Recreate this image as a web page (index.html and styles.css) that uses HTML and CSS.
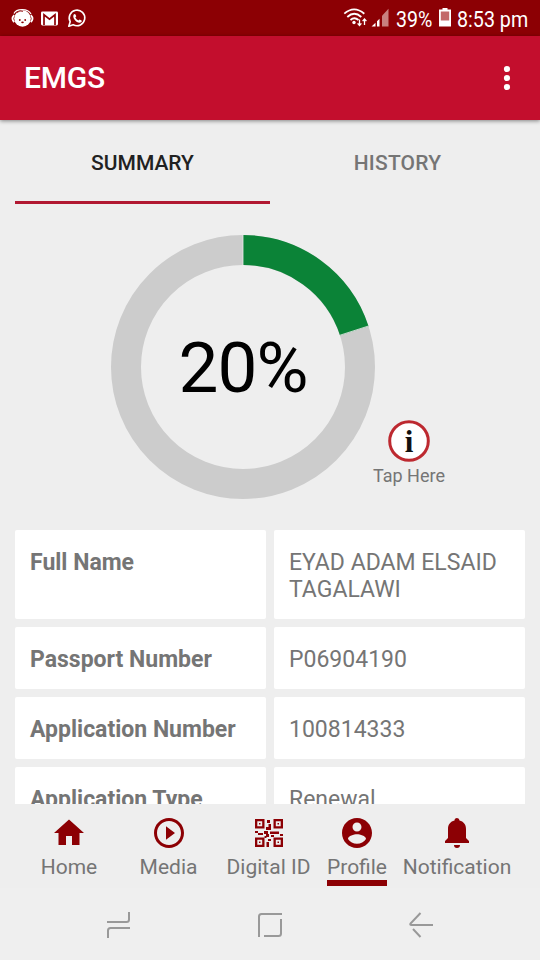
FILE: index.html
```html
<!DOCTYPE html>
<html lang="en">
<head>
<meta charset="utf-8">
<title>EMGS</title>
<link rel="stylesheet" href="styles.css">
</head>
<body>
<div class="screen">
  <div class="status">
    <svg class="status-left" width="90" height="36" viewBox="0 0 90 36" fill="none">
      <circle cx="22.5" cy="18.5" r="8.3" fill="#fff"/>
      <path d="M14 13.5C16 8.5 28 8 31 14" stroke="#fff" stroke-width="1.2"/>
      <path d="M14.200 15.200q-3.400 3.500 0 7M30.800 15.200q3.400 3.500 0 7" stroke="#fff" stroke-width="1.700"/>
      <path d="M17 12.500q3-2.500 6-1.200" stroke="#8c0004" stroke-width=".9"/>
      <g fill="#8c0004"><circle cx="19.800" cy="20" r=".9"/><circle cx="25.200" cy="20" r=".9"/><ellipse cx="22.500" cy="22.300" rx="1.300" ry=".9"/></g>
      <rect x="41" y="11.500" width="17" height="14" rx="1.400" fill="#fff"/>
      <path d="M44 25V14.800l5.500 4.400 5.500-4.400V25" stroke="#8c0004" stroke-width="1.700"/>
      <path d="M68.800 26.200l1.400-4.500a7.800 7.800 0 1 1 3 3z" stroke="#fff" stroke-width="1.600" stroke-linejoin="round"/>
      <path d="M73.700 14.400q1-1 1.800 0l.8 1.900-1 1.300q1 2.100 3.100 3l1.200-1.200 2 1q.6.9-.5 1.900c-3.400 2.200-9.600-4.500-7.400-7.900z" fill="#fff"/>
    </svg>
    <div class="status-right">
      <svg width="50" height="36" viewBox="340 0 50 36" fill="none">
        <g stroke="#fff" stroke-width="1.800">
          <path d="M344.300 13.700q9.700-8.700 20 0M347.300 17q6.900-6.400 14 0M350.500 20q3.900-3.500 8 0"/>
        </g>
        <circle cx="354" cy="22.500" r="1.700" fill="#fff"/>
        <path d="M359.500 19.500v6M357.600 23.300l1.900 2.200 1.900-2.200M364.500 25v-6M362.600 21.200l1.900-2.200 1.900 2.200" stroke="#fff" stroke-width="1.300"/>
        <path d="M371.500 26.500l4-3.800v3.800zM377 21.200l2.500-2.500v7.800H377z" fill="#fff"/>
        <path d="M382 15.800l6.500-7v17.700H382z" fill="#c9807f"/>
      </svg>
      <span class="battery-text">39%</span>
      <svg class="battery" width="12" height="36" viewBox="0 0 12 36">
        <path d="M3.500 8h5v1.500H12v17H0v-17h3.500z" fill="#fff"/>
        <path d="M1.800 11.500h8.400v9H1.800z" fill="#c36a6a"/>
      </svg>
      <span class="clock">8:53 pm</span>
    </div>
  </div>

  <header class="appbar">
    <h1>EMGS</h1>
    <svg width="8" height="28" viewBox="0 0 8 28" fill="#fff"><circle cx="4" cy="5" r="3.100"/><circle cx="4" cy="14" r="3.100"/><circle cx="4" cy="23" r="3.100"/></svg>
  </header>

  <main class="content">
    <nav class="tabs">
      <div class="tab active">SUMMARY</div>
      <div class="tab history">HISTORY</div>
    </nav>

    <section class="progress">
      <svg class="ring" width="264" height="264" viewBox="0 0 264 264">
        <circle cx="132" cy="132" r="117" fill="none" stroke="#ccc" stroke-width="30"/>
        <path d="M132 15A117 117 0 0 1 243.300 95.800" fill="none" stroke="#0b8337" stroke-width="30"/>
        <path d="M132 0v30M257.500 91l-28.500 9.200" stroke="#eee" stroke-width=".8"/>
        <text class="percent" x="132" y="156.500" text-anchor="middle">20%</text>
      </svg>
      <div class="info">
        <svg width="42" height="42" viewBox="0 0 42 42">
          <circle cx="21" cy="21" r="19.300" fill="#fff" stroke="#bd2930" stroke-width="3"/>
          <text class="info-letter" x="21" y="31.500" text-anchor="middle">i</text>
        </svg>
        <span>Tap Here</span>
      </div>
    </section>

    <section class="details">
      <div class="label">Full Name</div><div class="value">EYAD ADAM ELSAID TAGALAWI</div>
      <div class="label">Passport Number</div><div class="value">P06904190</div>
      <div class="label">Application Number</div><div class="value">100814333</div>
      <div class="label">Application Type</div><div class="value">Renewal</div>
    </section>
  </main>

  <nav class="bottom">
    <div class="item">
      <svg width="36" height="36" viewBox="0 0 24 24"><path d="M10 20v-6h4v6h5v-8h3L12 3 2 12h3v8z"/></svg>
      <span>Home</span>
    </div>
    <div class="item">
      <svg width="36" height="36" viewBox="0 0 24 24"><path d="M10 16.500l6-4.500-6-4.500v9zM12 2C6.480 2 2 6.480 2 12s4.480 10 10 10 10-4.480 10-10S17.520 2 12 2zm0 18c-4.410 0-8-3.590-8-8s3.590-8 8-8 8 3.590 8 8-3.590 8-8 8z"/></svg>
      <span>Media</span>
    </div>
    <div class="item">
      <svg width="36" height="36" viewBox="0 0 36 36">
        <path fill-rule="evenodd" d="M4 4h9.500v9.500H4zM6.300 6.300v4.900h4.900V6.300zM22.500 4H32v9.500h-9.500zM24.800 6.300v4.900h4.900V6.300zM4 22.500h9.500V32H4zM6.300 24.800v4.900h4.900v-4.900zM22.500 22.500H32V32h-9.500zM24.800 24.800v4.900h4.900v-4.900z"/>
        <path d="M8 8h1.500v1.500H8zM26.500 8H28v1.500h-1.500zM8 26.500h1.500V28H8zM26.500 26.500H28V28h-1.500zM16 5h3v3h-3zM17.500 9H20v6h-2.500zM15 12h2.500v3H15zM4 16h3v2H4zM7 18h5v2H7zM13 16h4v3h-4zM19 16.500h9v2.500h-9zM15 19h3v3h-3zM20 20h3v2h-3zM29 19h3v2h-3zM13.500 21h2v2h-2zM17 24h3v2h-3zM15.500 27h2.500v5h-2.500z"/>
      </svg>
      <span>Digital ID</span>
    </div>
    <div class="item selected">
      <svg width="36" height="36" viewBox="0 0 24 24"><path d="M12 2C6.480 2 2 6.480 2 12s4.480 10 10 10 10-4.480 10-10S17.520 2 12 2zm0 3c1.660 0 3 1.340 3 3s-1.340 3-3 3-3-1.340-3-3 1.340-3 3-3zm0 14.200c-2.500 0-4.710-1.280-6-3.220.03-1.990 4-3.080 6-3.080 1.990 0 5.970 1.090 6 3.080-1.290 1.940-3.500 3.220-6 3.220z"/></svg>
      <span>Profile</span>
    </div>
    <div class="item">
      <svg width="36" height="36" viewBox="0 0 36 36"><path d="M6 28v-2l3-3v-9c0-4.500 2.500-7.400 6.500-8.400V5.500a2.500 2.500 0 0 1 5 0v.1c4 1 6.500 3.900 6.500 8.400v9l3 3v2zM15 30h6a3 3 0 0 1-6 0z"/></svg>
      <span>Notification</span>
    </div>
  </nav>

  <footer class="system">
    <svg width="26" height="28" viewBox="0 0 26 28"><path d="M1 11h19.500q2.500 0 2.500-2.500V1M24 17H4.500Q2 17 2 19.500V27"/></svg>
    <svg width="26" height="28" viewBox="0 0 26 28"><path d="M2 26V5.500Q2 3 4.500 3H25M24 8v14.500q0 2.500-2.500 2.500H7"/></svg>
    <svg width="26" height="28" viewBox="0 0 26 28"><path d="M12.500 2L2.500 12.500q-.8 1.500 1 1.500H25M5 18l7.500 8"/></svg>
  </footer>
</div>
</body>
</html>
```
FILE: styles.css
```css
* { box-sizing: border-box; }
body { margin: 0; background: #eee; font-family: Roboto, sans-serif; color: #757575; }
svg { display: block; flex: none; }
.screen { width: 540px; height: 960px; display: flex; flex-direction: column; overflow: hidden; }

.status { height: 36px; flex: none; background: #8c0004; color: #fff; display: flex; justify-content: space-between; }
.status-right { display: flex; width: 200px; height: 36px; line-height: 39px; font-size: 22.5px; white-space: nowrap; }
.status-right span { transform-origin: 0 50%; }
.battery-text { width: 49px; padding-left: 7px; transform: scaleX(.87); }
.battery { margin: 0 6px 0 0; }
.clock { width: 83px; transform: scaleX(.875); }

.appbar { height: 84px; flex: none; background: #c30e2d; color: #fff; display: flex; align-items: center; justify-content: space-between; padding: 0 29px 0 24px; box-shadow: 0 1px 4px rgba(0,0,0,.45); z-index: 1; }
.appbar h1 { margin: 0; font-size: 30px; font-weight: 500; line-height: 86px; letter-spacing: -.2px; }

.content { height: 684px; flex: none; overflow: hidden; padding: 12px 15px 0; }
.tabs { display: flex; height: 72px; }
.tab { flex: 1; text-align: center; font-size: 21px; font-weight: 500; line-height: 62px; }
.tab.active { color: #212121; border-bottom: 3px solid #b11831; }
.tab.history { letter-spacing: .2px; }

.progress { height: 326px; display: flex; align-items: flex-start; padding: 31px 0 0 96px; }
.percent { font-size: 71px; letter-spacing: -1px; fill: #000; }
.info { width: 74px; margin: 185px 0 0 -3px; display: flex; flex-direction: column; align-items: center; font-size: 18px; line-height: 28px; white-space: nowrap; }
.info-letter { font: bold 31px "Liberation Serif", serif; fill: #111; }

.details { display: grid; grid-template-columns: 251px 251px; gap: 8px; font-size: 23px; line-height: 27px; }
.label, .value { background: #fff; border-radius: 2px; padding: 19px 15px 16px; min-height: 62px; }
.label { font-weight: 700; }

.bottom { height: 84px; flex: none; display: grid; grid-template-columns: 100px 99px 101px 76px 124px; padding: 11px 0 0 19px; font-size: 21px; line-height: 32px; }
.item { display: flex; flex-direction: column; align-items: center; white-space: nowrap; }
.item svg { fill: #8c0004; }
.selected span { border-bottom: 6px solid #8c0004; height: 35px; }

.system { height: 72px; flex: none; background: #efefef; display: flex; justify-content: space-between; padding: 23px 106px 0; }
.system svg { fill: none; stroke: #999; stroke-width: 2; }
```
